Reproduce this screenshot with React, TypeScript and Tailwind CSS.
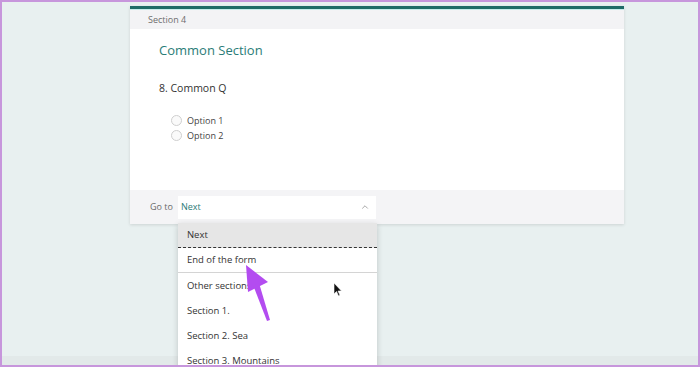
import { ChevronUp } from 'lucide-react';

const font = { fontFamily: '"Open Sans", "Noto Sans", sans-serif' };

function Radio({ label }: { label: string }) {
  return (
    <div className="flex items-center h-[15px]">
      <span className="w-[11px] h-[11px] rounded-full border border-[#cfcfcf] bg-[#fafafa]" />
      <span className="ml-[5px] text-[9px] text-[#444]">{label}</span>
    </div>
  );
}

function Item({ children, className = '' }: { children: React.ReactNode; className?: string }) {
  return (
    <div className={`h-[25px] flex items-center pl-[9px] pt-[2px] text-[9.5px] text-[#333] ${className}`}>
      {children}
    </div>
  );
}

export default function App() {
  return (
    <div
      className="w-[700px] h-[367px] overflow-hidden relative border-2 border-[#c796dc] bg-[#e8f0f0] flex flex-col"
      style={font}
    >
      <div className="flex-1">
        <div className="w-[494px] ml-[128px] mt-[4px] bg-white shadow-[0_1px_3px_rgba(0,0,0,0.12)]">
          <div className="h-[3px] bg-[#1f6b67]" />
          <div className="h-px bg-[#c5ecea]" />
          <div className="h-[19px] bg-[#f3f3f5] pl-[18px] flex items-center text-[9px] text-[#6e6e6e]">
            Section 4
          </div>

          <div className="h-[161px] pl-[29px] pt-[11px]">
            <div className="text-[13px] text-[#2a7c77] leading-[20px]">Common Section</div>
            <div className="mt-[20px] text-[10.5px] text-[#333] leading-[16px]">8. Common Q</div>
            <div className="mt-[17px] ml-[12px] flex flex-col">
              <Radio label="Option 1" />
              <Radio label="Option 2" />
            </div>
          </div>

          <div className="h-[34px] bg-[#f4f4f6] flex items-center pl-[20px]">
            <span className="text-[9px] text-[#6a6a6a]">Go to</span>
            <div className="relative ml-[5px] w-[198px] h-[23px] bg-white flex items-center justify-between pl-[3px] pr-[6px]">
              <span className="text-[9px] text-[#2a7c77]">Next</span>
              <ChevronUp className="w-[10px] h-[10px] text-[#777]" strokeWidth={1.5} />

              <div className="absolute left-0 top-[27px] w-[199px] bg-white shadow-[0_2px_6px_rgba(0,0,0,0.18)] z-10">
                <Item className="bg-[#e6e6e6] border-b border-dashed border-[#333]">Next</Item>
                <Item className="border-b border-[#d4d4d4]">End of the form</Item>
                <Item className="text-[#2a7c77]">Other sections</Item>
                <Item>Section 1.</Item>
                <Item>Section 2. Sea</Item>
                <Item>Section 3. Mountains</Item>
              </div>
            </div>
          </div>
        </div>
      </div>
      <div className="h-[9px] bg-[#e2e9e9]" />

      <svg className="absolute left-0 top-0 pointer-events-none z-20" width="700" height="367">
        <polygon points="244,263 246,290 266,280" fill="#b34cf0" />
        <polygon points="251,283 257,281 268,318 265,319" fill="#b34cf0" />
        <path
          d="M332 281 L332 292 L334.5 289.5 L336.5 294 L338 293.3 L336 289 L339.5 289 Z"
          fill="#111"
          stroke="#fff"
          strokeWidth="0.6"
        />
      </svg>
    </div>
  );
}
